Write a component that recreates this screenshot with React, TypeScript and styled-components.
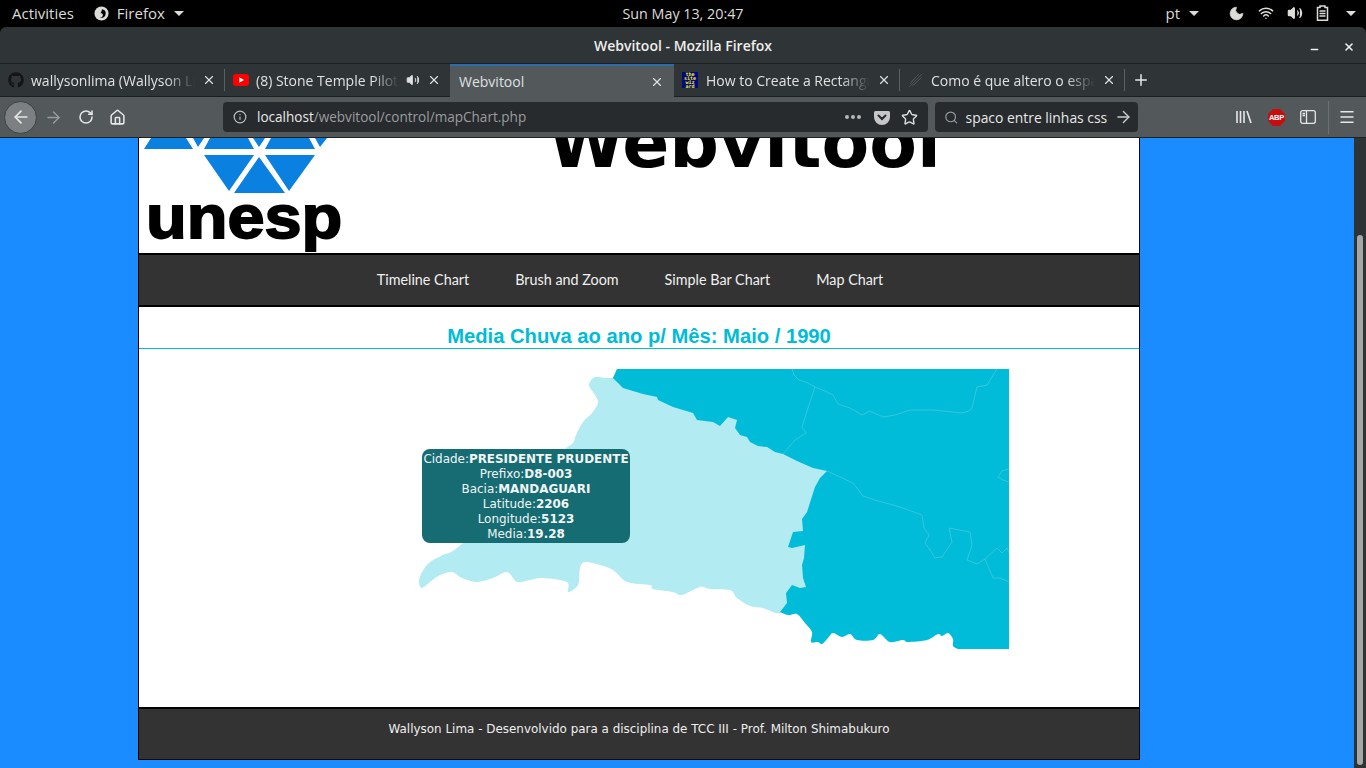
import React from "react";
import styled, { createGlobalStyle } from "styled-components";
import { ArrowLeft, ArrowRight, RotateCw, Home, Info, Search, Star, X, Plus, Menu, Moon, Wifi, Volume2, Minus } from "lucide-react";
import { FaGithub } from "react-icons/fa";

const Global = createGlobalStyle`
  html, body { margin: 0; padding: 0; height: 768px; overflow: hidden; background: #000; }
  * { box-sizing: border-box; }
`;
const Screen = styled.div`width:1366px;height:768px;display:flex;flex-direction:column;overflow:hidden;`;
const ChromeFont = `"Open Sans","Noto Sans",sans-serif`;

const TopBar = styled.div`
  height:27px;flex:none;background:#000;color:#dcdcd8;display:grid;grid-template-columns:1fr auto 1fr;align-items:center;
  font:500 15px ${ChromeFont};padding:0 0 1px 0;
`;
const TopLeft = styled.div`display:flex;align-items:center;gap:20px;padding-left:12px;`;
const TopItem = styled.span`display:inline-flex;align-items:center;gap:8px;`;
const Caret = styled.span<{ $far?: boolean }>`
  display:inline-block;border-left:5px solid transparent;border-right:5px solid transparent;border-top:5px solid #dcdcd8;margin-left:${p => (p.$far ? 4 : 1)}px;
`;
const Clock = styled.span`font-size:14.3px;`;
const TopRight = styled.div`display:flex;align-items:center;justify-content:flex-end;padding-right:10px;`;
const Lang = styled.span`display:inline-flex;align-items:center;gap:8px;margin-right:29px;font-size:15px;`;
const Tray = styled.div`display:flex;align-items:center;gap:13px;color:#dcdcd8;`;

const TitleBar = styled.div`
  height:37px;flex:none;background:#2f3437;border-radius:6px 6px 0 0;border-bottom:1px solid #1c1f20;position:relative;
  display:flex;align-items:center;justify-content:center;color:#eeeeec;font:600 14px ${ChromeFont};
`;
const WinButtons = styled.div`position:absolute;right:11px;top:11px;display:flex;gap:23px;color:#eeeeec;align-items:center;`;

const TabStrip = styled.div`height:33px;flex:none;background:#2f3437;display:flex;border-bottom:1px solid #1c1f20;position:relative;`;
const Tab = styled.div<{ $active?: boolean; $w: number; $sep?: boolean }>`
  width:${p => p.$w}px;flex:none;display:flex;align-items:center;padding:0 ${p => (p.$active ? 10 : 9)}px 0 ${p => (p.$active ? 9 : 8)}px;gap:7px;height:${p => (p.$active ? 33 : 32)}px;
  background:${p => (p.$active ? "#53585b" : "transparent")};
  border-top:${p => (p.$active ? "2px solid #2a6cb0" : "none")};
  color:#dfe1e1;font:400 14px ${ChromeFont};position:relative;
  &::after{content:"";display:${p => (p.$sep ? "block" : "none")};position:absolute;right:0;top:5px;bottom:5px;width:1px;background:#5c6164;}
`;
const TabText = styled.span`
  flex:1;min-width:0;white-space:nowrap;overflow:hidden;
  mask-image:linear-gradient(to right,#000 82%,transparent 100%);
`;
const TabTextPlain = styled.span`flex:1;white-space:nowrap;`;
const Wizard = styled.span`
  width:16px;height:16px;flex:none;background:#000a80;color:#ffee00;font:700 5px/4px "DejaVu Sans Mono",monospace;text-align:center;overflow:hidden;display:block;margin-right:1px;
`;
const NewTab = styled.div`width:32px;display:flex;align-items:center;justify-content:center;color:#e6e6e6;margin-left:0;`;

const Toolbar = styled.div`
  height:41px;flex:none;background:#53585b;border-bottom:1px solid #1e2122;display:flex;align-items:center;padding:0 0 0 4px;color:#e6e6e6;
`;
const BackBtn = styled.div`
  width:33px;height:33px;border-radius:50%;background:#7c8082;border:1px solid #3c4043;display:flex;align-items:center;justify-content:center;flex:none;
`;
const NavIcons = styled.div`display:flex;align-items:center;gap:15px;margin-left:7px;width:179px;`;
const Field = styled.div<{ $w: number }>`
  width:${p => p.$w}px;height:30px;flex:none;background:#272b2e;border-radius:4px;display:flex;align-items:center;font:400 14px ${ChromeFont};color:#e8e8e8;
`;
const UrlField = styled(Field)`padding:0 10px 0 10px;gap:9px;margin-right:7px;font-size:13.55px;`;
const InfoGap = styled.span`display:flex;margin-right:1px;`;
const Dim = styled.span`color:#9a9d9f;`;
const UrlText = styled.span`flex:1;white-space:nowrap;`;
const Dots = styled.span`display:flex;gap:2px;margin-right:4px;`;
const Dot = styled.i`width:4px;height:4px;border-radius:50%;background:#b4b6b7;display:block;`;
const StarGap = styled.span`display:flex;margin-left:2px;`;
const SearchField = styled(Field)`padding:0 5px 0 9px;gap:7px;font-size:13.9px;`;
const ToolRight = styled.div`display:flex;align-items:center;margin-left:auto;padding-right:10px;gap:0;`;
const ToolSep = styled.span`width:1px;height:33px;background:#6d7174;margin:0 9px 0 12px;`;
const Abp = styled.span`width:17px;height:17px;position:relative;display:block;margin:0 15px 0 16px;`;
const AbpText = styled.span`
  position:absolute;inset:0;color:#fff;font:700 7.5px/17px "Liberation Sans",sans-serif;text-align:center;letter-spacing:-.2px;
`;

const Page = styled.div`flex:1;display:flex;background:#1a8cff;min-height:0;`;
const PageInner = styled.div`flex:1;padding-left:138px;min-width:0;`;
const ScrollTrack = styled.div`width:12px;flex:none;background:#2e3436;padding:97px 3px 0;`;
const ScrollThumb = styled.div`width:6px;height:530px;border-radius:3px;background:#a5a7a5;`;

const Wrapper = styled.div`
  width:1002px;border:solid #000;border-width:0 1px 1px;background:#fff;display:flex;flex-direction:column;
`;
const Header = styled.header`height:115px;overflow:hidden;display:flex;flex:none;position:relative;`;
const LogoBlock = styled.div`width:205px;flex:none;display:flex;flex-direction:column;`;
const LogoMark = styled.svg`flex:none;display:block;`;
const Unesp = styled.div`
  font:700 62px/50px "Liberation Sans",Arial,sans-serif;color:#000;-webkit-text-stroke:1.8px #000;margin:-2px 0 0 7px;height:60px;white-space:nowrap;
  transform:scaleX(1.075);transform-origin:left center;
`;
const BrandTitle = styled.h1`
  margin:-33px 0 0 204px;font:700 69.5px/75px "DejaVu Sans",Verdana,sans-serif;color:#000;white-space:nowrap;height:75px;
`;
const Nav = styled.nav`
  height:54px;flex:none;background:#333;border:solid #000;border-width:2px 0;display:flex;align-items:center;justify-content:center;gap:46px;padding:0 18px 2px 0;
`;
const NavLink = styled.a`color:#f0f0f0;font:400 14.35px Lato,"Open Sans",sans-serif;white-space:nowrap;`;
const ChartTitle = styled.h2`
  margin:0;height:42px;flex:none;border-bottom:1px solid #00bcd4;color:#00bcd4;text-align:center;font:700 20.2px/58px "Liberation Sans",Arial,sans-serif;
`;
const MapArea = styled.div`height:358px;flex:none;position:relative;padding-top:20px;`;
const MapSvg = styled.svg`display:block;`;
const Tooltip = styled.div`
  position:absolute;left:283px;top:100px;width:208px;height:94px;background:rgba(18,106,112,.985);border-radius:8px;color:#f2f5f5;
  text-align:center;font:400 11.95px/15px "DejaVu Sans",sans-serif;padding:3px 0;white-space:nowrap;
`;
const TipRow = styled.div``;
const Footer = styled.footer`
  height:52px;flex:none;background:#333;border-top:2px solid #000;color:#eee;text-align:center;font:400 11.95px/16px "DejaVu Sans",sans-serif;padding-top:12px;
`;

/* Catmull-Rom curve through a run of "x,y" points, so the coast keeps its bumps. */
const toPts = (s: string) => s.trim().split(/\s+/).map(p => p.split(",").map(Number));
const smooth = (s: string) => {
  const p = toPts(s);
  let d = "";
  for (let i = 0; i < p.length - 1; i++) {
    const a = p[Math.max(i - 1, 0)], b = p[i], c = p[i + 1], e = p[Math.min(i + 2, p.length - 1)];
    const k = 0.16;
    d += `C${b[0] + (c[0] - a[0]) * k} ${b[1] + (c[1] - a[1]) * k} ${c[0] - (e[0] - b[0]) * k} ${c[1] - (e[1] - b[1]) * k} ${c[0]} ${c[1]} `;
  }
  return d;
};
const straight = (s: string) => toPts(s).map(q => `L${q[0]} ${q[1]}`).join(" ") + " ";

const lightPath =
  "M617 369 L613 378 " +
  smooth("613,378 606,378 595,377 589,385 595,395 598,403 592,413 583,422 576,435 573,443 565,449 540,470 463,543 443,555 430,562 422,572 419,582 422,588 430,582 440,575 452,572 462,578 477,582 493,578 507,572 517,582 530,580 543,578 567,582 568,592 578,585 580,568 585,562 600,565 613,570 627,582 650,585 653,589 673,592 682,595 700,587 710,589 730,590 737,598 750,606 763,608 775,613 782,613") +
  "L815 600 L830 470 L700 400 Z";
const darkPath =
  "M617 369 " +
  straight("613,378 623,388 643,394 657,397 658,400 673,407 693,413 697,420 713,422 720,426 728,417 737,420 735,428 740,435 747,437 750,442 758,446 767,447 775,452 783,454 797,461 813,468 827,471 820,478 815,487 807,512 802,519 803,531 793,532 788,547 792,548 805,545 804,558 802,565 803,578 806,587 800,588 792,585 786,593 787,603 780,612") +
  smooth("780,612 788,615 797,614 805,623 812,632 811,642 818,642 822,644 828,638 833,633 842,637 850,634 857,640 873,640 880,634 890,642 903,640 908,642 927,640 938,634 942,636 948,633 953,639 953,646 958,649") +
  "L1009 649 L1009 369 Z";
const borders = [
  "792,369 794,375 799,380 808,383 815,387 825,391 833,395 838,404 850,408 862,415 870,411 883,417 895,415 910,410 933,410 962,413 969,411 972,408 977,387 987,385 997,369",
  "815,387 808,408 802,427 806,433 795,440 783,454",
  "827,471 853,483 863,496 875,500 900,507 922,515 924,528 929,535 925,543 930,550 935,558 942,557 952,542 949,528 970,532 972,545 967,560 977,564 985,559 993,578 1000,578 1009,582",
  "985,559 997,548 1002,553 1007,548 1009,553",
  "1009,469 1002,471 998,477 1003,480 1009,482",
];

function FirefoxIcon() {
  return (
    <svg width="15" height="15" viewBox="0 0 16 16">
      <circle cx="8" cy="8" r="7.5" fill="#dcdcd8" />
      <path d="M8.5 3.5a4.6 4.6 0 0 1 4 4.6 4.5 4.5 0 0 1-6.5 4c2 .2 3.5-1 3.5-2.6C9.500 8 8 7.500 7 7.800 7.500 6 8.500 5 8.500 3.500z" fill="#000" />
    </svg>
  );
}
function Battery() {
  return (
    <svg width="13" height="16" viewBox="0 0 13 16" fill="none" stroke="#dcdcd8" strokeWidth="1.5">
      <path d="M4 1h5v1.500h2.500v12.700h-10V2.500H4z" />
      <path d="M3.500 6h6M3.500 8.500h6M3.500 11h6" />
    </svg>
  );
}
function YouTube() {
  return (
    <svg width="16" height="12" viewBox="0 0 16 12">
      <rect width="16" height="12" rx="3" fill="#f00" />
      <path d="M6.300 3.300 11 6l-4.700 2.700z" fill="#fff" />
    </svg>
  );
}
function Feather() {
  return (
    <svg width="16" height="16" viewBox="0 0 16 16" fill="none" stroke="#4a4f53" strokeWidth="1">
      <path d="M1 15 14 2M3 10l8-8M4 14l10-9M2 12l6-7M6 13l6-6" />
    </svg>
  );
}
function Pocket() {
  return (
    <svg width="16" height="15" viewBox="0 0 16 15">
      <path d="M1.500 1h13A1.500 1.500 0 0 1 16 2.500V7a8 8 0 0 1-16 0V2.500A1.500 1.500 0 0 1 1.500 1z" fill="#c5c7c8" />
      <path d="M4.500 5.500 8 9l3.500-3.500" fill="none" stroke="#272b2e" strokeWidth="2" strokeLinecap="round" />
    </svg>
  );
}
function Library() {
  return (
    <svg width="16" height="14" viewBox="0 0 16 14" fill="none" stroke="#e6e6e6" strokeWidth="1.600">
      <path d="M1 1v12M4.500 1v12M8 1v12M11 1l4 12" />
    </svg>
  );
}
function Sidebar() {
  return (
    <svg width="16" height="14" viewBox="0 0 16 14" fill="none" stroke="#e6e6e6" strokeWidth="1.300">
      <rect x=".7" y=".7" width="14.600" height="12.600" rx="2" />
      <path d="M6.500 1v12" />
      <path d="M2.500 3.500h2.500M2.500 5.500h2.500" />
    </svg>
  );
}
function Octagon() {
  return (
    <svg width="17" height="17" viewBox="0 0 17 17" style={{ display: "block" }}>
      <path d="M5 0h7l5 5v7l-5 5H5l-5-5V5z" fill="#c70d0d" />
    </svg>
  );
}

export default function App() {
  return (
    <Screen>
      <Global />
      <TopBar>
        <TopLeft>
          <span>Activities</span>
          <TopItem><FirefoxIcon /> Firefox <Caret /></TopItem>
        </TopLeft>
        <Clock>Sun May 13, 20:47</Clock>
        <TopRight>
          <Lang>pt <Caret /></Lang>
          <Tray>
            <Moon size={17} fill="#dcdcd8" strokeWidth={1} />
            <Wifi size={16} strokeWidth={2.2} />
            <Volume2 size={16} fill="#dcdcd8" strokeWidth={1.800} />
            <Battery />
            <Caret $far />
          </Tray>
        </TopRight>
      </TopBar>
      <TitleBar>
        Webvitool - Mozilla Firefox
        <WinButtons>
          <Minus size={11} strokeWidth={3} style={{ marginTop: 6 }} />
          <X size={12} strokeWidth={3.200} />
        </WinButtons>
      </TitleBar>
      <TabStrip>
        <Tab $w={225} $sep>
          <FaGithub size={16} color="#141414" />
          <TabText>wallysonlima (Wallyson Lima)</TabText>
          <X size={14} strokeWidth={2} />
        </Tab>
        <Tab $w={225}>
          <YouTube />
          <TabText>(8) Stone Temple Pilots</TabText>
          <Volume2 size={14} fill="#dfe1e1" strokeWidth={1.500} />
          <X size={14} strokeWidth={2} />
        </Tab>
        <Tab $w={224} $active>
          <TabTextPlain>Webvitool</TabTextPlain>
          <X size={14} strokeWidth={2} />
        </Tab>
        <Tab $w={226} $sep>
          <Wizard>the site wiz ard</Wizard>
          <TabText>How to Create a Rectangular</TabText>
          <X size={14} strokeWidth={2} />
        </Tab>
        <Tab $w={225} $sep>
          <Feather />
          <TabText>Como é que altero o espaço</TabText>
          <X size={14} strokeWidth={2} />
        </Tab>
        <NewTab><Plus size={18} strokeWidth={2} /></NewTab>
      </TabStrip>
      <Toolbar>
        <BackBtn><ArrowLeft size={20} strokeWidth={2} /></BackBtn>
        <NavIcons>
          <ArrowRight size={19} strokeWidth={1.800} color="#989b9d" />
          <RotateCw size={16} strokeWidth={2.300} />
          <Home size={17} strokeWidth={2.200} />
        </NavIcons>
        <UrlField $w={705}>
          <InfoGap><Info size={14} color="#c0c2c3" /></InfoGap>
          <UrlText>localhost<Dim>/webvitool/control/mapChart.php</Dim></UrlText>
          <Dots><Dot /><Dot /><Dot /></Dots>
          <Pocket />
          <StarGap><Star size={17} strokeWidth={2} color="#dcdcdc" /></StarGap>
        </UrlField>
        <SearchField $w={203}>
          <Search size={17} color="#989b9d" />
          <UrlText>spaco entre linhas css</UrlText>
          <ArrowRight size={22} strokeWidth={1.800} color="#c9cbcc" />
        </SearchField>
        <ToolRight>
          <Library />
          <Abp><Octagon /><AbpText>ABP</AbpText></Abp>
          <Sidebar />
          <ToolSep />
          <Menu size={18} strokeWidth={2} />
        </ToolRight>
      </Toolbar>
      <Page>
        <PageInner>
          <Wrapper>
            <Header>
              <LogoBlock>
                <LogoMark width="190" height="56" viewBox="139 138 190 56" fill="#0a80e0">
                  <path d="M151 138h35l7 11h-49zM193 138h11l-6 9zM210 138h38l6 11h-50zM253 138h12l-6 9zM271 138h38l6 11h-50zM315 138h12l-7 9zM204 155h50l-25 36zM259 157l26 36h-51zM265 155h50l-26 36z" />
                </LogoMark>
                <Unesp>unesp</Unesp>
              </LogoBlock>
              <BrandTitle>Webvitool</BrandTitle>
            </Header>
            <Nav>
              <NavLink>Timeline Chart</NavLink>
              <NavLink>Brush and Zoom</NavLink>
              <NavLink>Simple Bar Chart</NavLink>
              <NavLink>Map Chart</NavLink>
            </Nav>
            <ChartTitle>Media Chuva ao ano p/ Mês: Maio / 1990</ChartTitle>
            <MapArea>
              <MapSvg width="1000" height="280" viewBox="139 369 1000 280">
                <path d={lightPath} fill="#b2ebf2" />
                <path d={darkPath} fill="#00bcd8" />
                {borders.map(b => (
                  <polyline key={b} points={b} fill="none" stroke="#45c8dd" strokeWidth=".8" />
                ))}
              </MapSvg>
              <Tooltip>
                <TipRow>Cidade:<b>PRESIDENTE PRUDENTE</b></TipRow>
                <TipRow>Prefixo:<b>D8-003</b></TipRow>
                <TipRow>Bacia:<b>MANDAGUARI</b></TipRow>
                <TipRow>Latitude:<b>2206</b></TipRow>
                <TipRow>Longitude:<b>5123</b></TipRow>
                <TipRow>Media:<b>19.28</b></TipRow>
              </Tooltip>
            </MapArea>
            <Footer>Wallyson Lima - Desenvolvido para a disciplina de TCC III - Prof. Milton Shimabukuro</Footer>
          </Wrapper>
        </PageInner>
        <ScrollTrack><ScrollThumb /></ScrollTrack>
      </Page>
    </Screen>
  );
}
